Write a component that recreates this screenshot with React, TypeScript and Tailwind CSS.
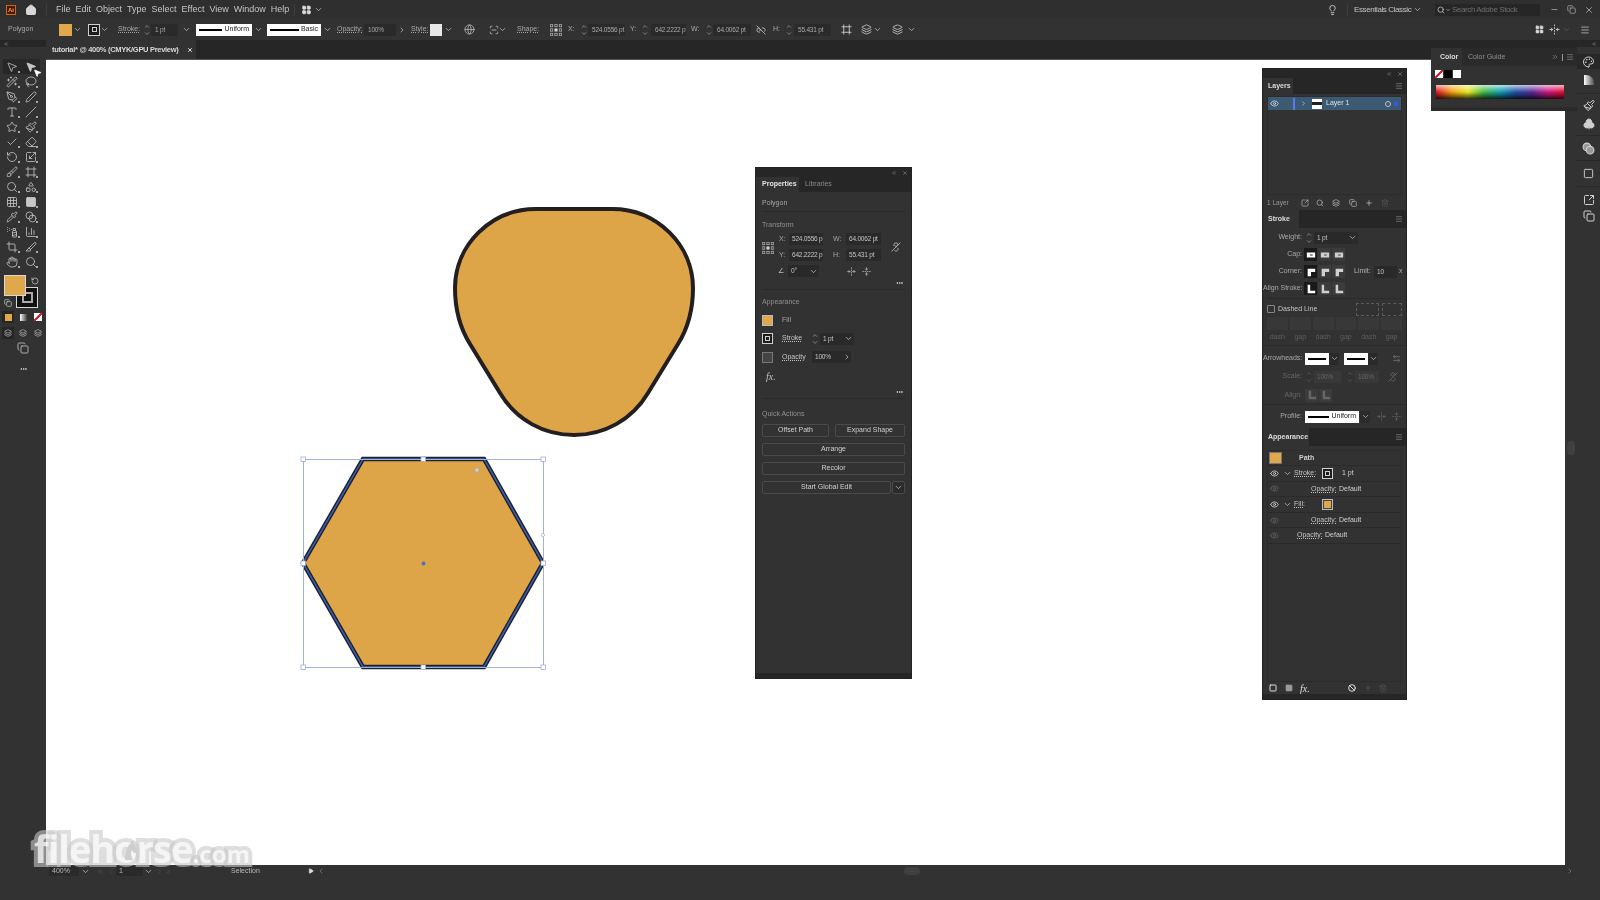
import {
  Lasso, Wand2, PenTool, Pen, Type, Slash, Star, Paintbrush, Brush, Check, Eraser, RotateCcw, Scaling,
  Shapes, Grid3x3, Pipette, Blend, SprayCan, ChartColumn, Crop, Slice, Hand, Search, MousePointer2,
  ChevronDown, ChevronUp, ChevronRight, ChevronLeft, ChevronsRight, ChevronsLeft, Eye, Link2Off, Lightbulb, Home, Menu, X, Minus, Copy,
  LayoutGrid, Palette, Club, SquareArrowOutUpRight, Ban, Trash2, Plus, Square, Layers, ArrowLeftRight, FoldVertical, FoldHorizontal,
  MoreHorizontal, ScanLine, Frame, Globe, Play,
} from 'lucide-react'

const FONT = "font-['Liberation_Sans','Noto_Sans',sans-serif]"

function Spinner() {
  return (
    <div className="flex flex-col items-center w-[8px] shrink-0 text-[#b5b5b5]">
      <ChevronUp className="w-[8px] h-[7px]" />
      <ChevronDown className="w-[8px] h-[7px]" />
    </div>
  )
}

function Chev({ className = '' }: { className?: string }) {
  return <ChevronDown className={`w-[9px] h-[9px] text-[#c0c0c0] shrink-0 ${className}`} />
}

function RefGrid({ className = '' }: { className?: string }) {
  return (
    <svg viewBox="0 0 12 12" className={`w-[12px] h-[12px] shrink-0 ${className}`} fill="none" stroke="#a8a8a8" strokeWidth="0.8">
      {[1.5, 6, 10.5].map((y) => [1.5, 6, 10.5].map((x) => (
        <rect key={`${x}-${y}`} x={x - 1.2} y={y - 1.2} width="2.4" height="2.4" fill={x === 6 && y === 6 ? '#eee' : 'none'} />
      )))}
    </svg>
  )
}

function LineBox({ label, className }: { label?: string; className: string }) {
  return (
    <div className={`h-[12px] bg-white flex items-center px-[3px] gap-[2px] shrink-0 ${className}`}>
      <div className="flex-1 h-[2px] bg-black" />
      {label && <span className="text-[7px] text-[#222]">{label}</span>}
    </div>
  )
}

function StrokeSwatch({ className = '' }: { className?: string }) {
  return (
    <div className={`w-[11px] h-[11px] bg-[#1c1c1c] border border-[#d0d0d0] flex items-center justify-center shrink-0 ${className}`}>
      <div className="w-[5px] h-[5px] border border-[#d0d0d0]" />
    </div>
  )
}

function PropField({ text, className }: { text: string; className: string }) {
  return (
    <div className={`h-[12px] bg-[#292929] text-[6.5px] tracking-[-0.2px] text-[#c4c4c4] flex items-center px-[3px] whitespace-nowrap overflow-hidden shrink-0 ${className}`}>
      {text}
    </div>
  )
}

function Dots({ className = '' }: { className?: string }) {
  return <MoreHorizontal className={`w-[11px] h-[8px] text-[#d0d0d0] ${className}`} strokeWidth={3} />
}

function StrokeIcon({ kind, active, dim }: { kind: 'cap' | 'corner' | 'align'; active?: boolean; dim?: boolean }) {
  const body = kind === 'cap'
    ? <path d="M1 3h10v6H1zM5 5.4h3v1.2H5z" fillRule="evenodd" />
    : kind === 'corner'
      ? <path d="M2 2h9v4H6v5H2z" />
      : <path d="M2 1h3v7h6v3H2z" />
  return (
    <div className={`w-[13px] h-[13px] flex items-center justify-center shrink-0 ${active ? 'bg-[#1a1a1a]' : 'bg-[#3b3b3b]'}`}>
      <svg viewBox="0 0 12 12" className="w-[10px] h-[10px]" fill={active ? '#fff' : dim ? '#666' : '#cfcfcf'}>{body}</svg>
    </div>
  )
}

function PanelTop() {
  return (
    <div className="h-[9px] bg-[#262626] flex items-center justify-end gap-[5px] pr-[3px] shrink-0">
      <ChevronsLeft className="w-[6px] h-[6px] text-[#9a9a9a]" />
      <X className="w-[6px] h-[6px] text-[#9a9a9a]" />
    </div>
  )
}

function ToolButton({ icon: Icon, active, fill }: { icon: any; active?: boolean; fill?: boolean }) {
  return (
    <div className={`relative h-[15px] flex items-center justify-center ${active ? 'bg-[#272727]' : ''}`}>
      <Icon className="w-[12px] h-[12px] text-[#c6c6c6]" fill={fill ? '#c6c6c6' : 'none'} strokeWidth={1.6} />
      <span className="absolute right-[2px] bottom-[1px] w-[2px] h-[2px] bg-[#a8a8a8]" />
    </div>
  )
}

const tools = [
  MousePointer2, MousePointer2, Wand2, Lasso, PenTool, Pen, Type, Slash, Star, Paintbrush,
  Check, Eraser, RotateCcw, Scaling, Brush, Frame, Search, Shapes, Grid3x3, Square, Pipette, Blend,
  SprayCan, ChartColumn, Crop, Slice, Hand, Search,
]

function LeftToolbar() {
  return (
    <aside className="relative w-[46px] shrink-0 bg-[#323232] flex flex-col">
      <div className="h-[7px] bg-[#262626] flex items-center pl-[3px]">
        <ChevronsLeft className="w-[6px] h-[6px] text-[#999]" />
      </div>
      <div className="grid grid-cols-2 w-[37px] ml-[3px] mt-[12px]">
        {tools.map((t, i) => <ToolButton key={i} icon={t} active={i < 2} fill={i === 1 || i === 19} />)}
      </div>
      <div className="relative h-[35px] mx-[4px] mt-[6px]">
        <div className="absolute left-[12px] top-[12px] w-[22px] h-[21px] bg-[#111] border border-[#d8d8d8] flex items-center justify-center">
          <div className="w-[11px] h-[11px] border-2 border-[#aaa]" />
        </div>
        <div className="absolute left-0 top-0 w-[22px] h-[21px] bg-[#e0a84a] border border-[#d8d8d8]" />
        <RotateCcw className="absolute left-[27px] top-[2px] w-[8px] h-[8px] text-[#d0d0d0]" />
        <Copy className="absolute left-0 top-[24px] w-[8px] h-[8px] text-[#d0d0d0]" />
      </div>
      <div className="flex justify-center gap-[3px] mt-[1px]">
        <div className="w-[12px] h-[12px] bg-[#262626] flex items-center justify-center"><div className="w-[7px] h-[7px] bg-[#e0a84a]" /></div>
        <div className="w-[12px] h-[12px] flex items-center justify-center"><div className="w-[7px] h-[7px] bg-gradient-to-r from-white to-[#444]" /></div>
        <div className="w-[12px] h-[12px] flex items-center justify-center">
          <div className="w-[8px] h-[8px] bg-[linear-gradient(135deg,#fff_40%,#e0202a_40%,#e0202a_60%,#fff_60%)]" />
        </div>
      </div>
      <div className="flex justify-center gap-[3px] mt-[4px]">
        {[0, 1, 2].map((i) => (
          <div key={i} className={`w-[12px] h-[12px] flex items-center justify-center ${i === 0 ? 'bg-[#262626]' : ''}`}>
            <Layers className="w-[8px] h-[8px] text-[#bbb]" />
          </div>
        ))}
      </div>
      <div className="flex justify-center mt-[3px]"><Copy className="w-[14px] h-[12px] text-[#aaa]" /></div>
      <div className="flex justify-center mt-[11px]"><Dots className="text-[#aaa]" /></div>
      <MousePointer2 className="absolute left-[33px] top-[27px] w-[9px] h-[12px] text-white" fill="#fff" />
    </aside>
  )
}

function MenuBar() {
  const items = ['File', 'Edit', 'Object', 'Type', 'Select', 'Effect', 'View', 'Window', 'Help']
  return (
    <header className="h-[19px] bg-[#2f2f2f] flex items-center text-[9px] text-[#c4c4c4] shrink-0">
      <div className="ml-[6px] w-[10px] h-[10px] bg-[#4a1a00] border border-[#c9661b] text-[6px] leading-none text-[#ff9a2e] flex items-center justify-center font-bold">Ai</div>
      <Home className="ml-[9px] w-[12px] h-[12px] text-[#d8d8d8]" fill="#d8d8d8" />
      <div className="ml-[9px] w-px h-[12px] bg-[#3e3e3e]" />
      <nav className="ml-[9px] flex gap-[5px]">
        {items.map((m) => <span key={m}>{m}</span>)}
      </nav>
      <div className="ml-[5px] w-px h-[12px] bg-[#3e3e3e]" />
      <LayoutGrid className="ml-[6px] w-[11px] h-[10px] text-[#ddd]" fill="#ddd" />
      <Chev className="ml-[2px]" />
      <div className="ml-auto flex items-center">
        <Lightbulb className="w-[11px] h-[12px] text-[#c8c8c8]" />
        <div className="ml-[9px] w-px h-[12px] bg-[#3e3e3e]" />
        <span className="ml-[6px] text-[8px] tracking-[-0.4px] w-[56px] whitespace-nowrap">Essentials Classic</span>
        <Chev className="ml-[3px]" />
        <div className="ml-[13px] w-[105px] h-[12px] bg-[#262626] rounded-[1px] flex items-center px-[2px] text-[8px] tracking-[-0.4px] text-[#6f6f6f]">
          <Search className="w-[8px] h-[8px] text-[#ddd]" />
          <ChevronDown className="w-[6px] h-[6px] text-[#ddd]" />
          <span className="ml-[1px] whitespace-nowrap">Search Adobe Stock</span>
        </div>
        <div className="ml-[2px] w-[58px] flex items-center justify-between pr-[6px] pl-[8px] text-[#aaa]">
          <Minus className="w-[9px] h-[9px]" />
          <Copy className="w-[9px] h-[9px]" />
          <X className="w-[10px] h-[10px]" />
        </div>
      </div>
    </header>
  )
}

function CtlField({ text, className }: { text: string; className: string }) {
  return <div className={`h-[12px] bg-[#2a2a2a] text-[6.5px] tracking-[-0.2px] flex items-center pl-[4px] whitespace-nowrap overflow-hidden ${className}`}>{text}</div>
}

function ControlBar() {
  return (
    <div className="h-[21px] bg-[#323232] flex items-center text-[7px] text-[#a8a8a8] shrink-0 whitespace-nowrap [&>*]:shrink-0">
      <span className="ml-[8px] w-[51px]">Polygon</span>
      <div className="w-[13px] h-[12px] bg-[#e0a84a]" />
      <Chev className="ml-[1px]" />
      <StrokeSwatch className="ml-[6px] w-[12px] h-[12px]" />
      <Chev />
      <span className="ml-[9px] w-[20px] underline decoration-dotted">Stroke:</span>
      <div className="ml-[5px]"><Spinner /></div>
      <CtlField text="1 pt" className="w-[27px]" />
      <Chev className="ml-[4px]" />
      <LineBox label="Uniform" className="ml-[5px] w-[56px]" />
      <Chev className="ml-[2px]" />
      <LineBox label="Basic" className="ml-[4px] w-[54px]" />
      <Chev className="ml-[2px]" />
      <span className="ml-[5px] w-[24px] underline decoration-dotted">Opacity:</span>
      <CtlField text="100%" className="ml-[3px] w-[32px]" />
      <ChevronRight className="ml-[2px] w-[8px] h-[8px] text-[#ccc]" />
      <span className="ml-[5px] w-[16px] underline decoration-dotted">Style:</span>
      <div className="ml-[3px] w-[12px] h-[12px] bg-[#e8e8e8]" />
      <Chev className="ml-[2px]" />
      <Globe className="ml-[11px] w-[11px] h-[11px] text-[#aaa]" />
      <ScanLine className="ml-[14px] w-[10px] h-[10px] text-[#bbb]" />
      <Chev className="-ml-[1px]" />
      <span className="ml-[10px] w-[20px] underline decoration-dotted">Shape:</span>
      <RefGrid className="ml-[13px]" />
      <span className="ml-[6px] w-[6px]">X:</span>
      <div className="ml-[6px]"><Spinner /></div>
      <CtlField text="524.0556 pt" className="w-[37px]" />
      <span className="ml-[5px] w-[6px]">Y:</span>
      <div className="ml-[5px]"><Spinner /></div>
      <CtlField text="642.2222 pt" className="ml-[2px] w-[35px]" />
      <span className="ml-[5px] w-[8px]">W:</span>
      <div className="ml-[6px]"><Spinner /></div>
      <CtlField text="64.0062 pt" className="w-[38px]" />
      <Link2Off className="ml-[5px] w-[10px] h-[10px] text-[#c0c0c0]" />
      <span className="ml-[7px] w-[6px]">H:</span>
      <div className="ml-[6px]"><Spinner /></div>
      <CtlField text="55.431 pt" className="ml-[1px] w-[37px]" />
      <Frame className="ml-[10px] w-[11px] h-[11px] text-[#ccc]" />
      <Layers className="ml-[9px] w-[11px] h-[11px] text-[#bbb]" />
      <Chev className="ml-[1px]" />
      <Layers className="ml-[10px] w-[11px] h-[11px] text-[#bbb]" />
      <Chev className="ml-[4px]" />
      <div className="ml-auto flex items-center pr-[10px]">
        <LayoutGrid className="w-[9px] h-[9px] text-[#ddd]" fill="#ddd" />
        <FoldHorizontal className="ml-[5px] w-[11px] h-[11px] text-[#ccc]" />
        <Chev className="ml-[2px] opacity-30" />
        <Menu className="ml-[9px] w-[10px] h-[10px] text-[#bbb]" />
      </div>
    </div>
  )
}

function Artwork() {
  const handles: [number, number][] = [[303, 459], [423, 459], [543, 459], [303, 563], [543, 563], [303, 667], [423, 667], [543, 667]]
  return (
    <svg viewBox="46 60 1519 805" className="absolute inset-0 w-full h-full">
      <path
        d="M536 209 L612 209 C657 209 693 245 693 288 C693 308 688 328 678 344 L648 393 C632 420 604 435 574 435 C544 435 516 420 500 393 L470 344 C460 328 455 308 455 288 C455 245 491 209 536 209 Z"
        fill="#dea548" stroke="#231f20" strokeWidth="4"
      />
      <path d="M363 459 H484 L543 563 L484 667 H363 L303 563 Z" fill="#dea548" stroke="#1c2130" strokeWidth="4.4" strokeLinejoin="miter" />
      <path d="M363 459 H484 L543 563 L484 667 H363 L303 563 Z" fill="none" stroke="#3f5fae" strokeWidth="1.5" />
      <rect x="303.5" y="459.5" width="240" height="208" fill="none" stroke="#a3b2d4" strokeWidth="1" />
      {handles.map(([x, y]) => (
        <rect key={`${x}-${y}`} x={x - 2} y={y - 2} width="4.5" height="4.5" fill="#fff" stroke="#9fb0d2" strokeWidth="0.8" />
      ))}
      <circle cx="423.5" cy="563.5" r="2" fill="#4f6fc0" />
      <circle cx="477" cy="470" r="2.4" fill="#e8c88e" stroke="#8fa2cc" strokeWidth="0.8" />
      <circle cx="543" cy="535" r="1.6" fill="#fff" stroke="#9fb0d2" strokeWidth="0.7" />
    </svg>
  )
}

function StatusBar() {
  return (
    <div className="h-[12px] bg-[#323232] flex items-center text-[7px] text-[#b8b8b8] shrink-0">
      <div className="ml-[3px] w-[30px] h-[10px] bg-[#2a2a2a] pl-[3px] leading-[10px]">400%</div>
      <Chev className="ml-[2px]" />
      <ChevronsLeft className="ml-[7px] w-[7px] h-[7px] text-[#555]" />
      <ChevronLeft className="ml-[3px] w-[7px] h-[7px] text-[#555]" />
      <div className="ml-[2px] w-[27px] h-[10px] bg-[#2a2a2a] pl-[3px] leading-[10px]">1</div>
      <Chev className="ml-[1px]" />
      <ChevronRight className="ml-[3px] w-[7px] h-[7px] text-[#555]" />
      <ChevronsRight className="ml-[2px] w-[7px] h-[7px] text-[#555]" />
      <span className="ml-[59px] w-[77px]">Selection</span>
      <Play className="w-[6px] h-[6px] text-[#ddd]" fill="#ddd" />
      <ChevronLeft className="ml-[3px] w-[8px] h-[8px] text-[#888]" />
      <div className="relative flex-1 h-full">
        <div className="absolute left-[579px] top-[2px] w-[16px] h-[8px] rounded-full bg-[#414141]" />
      </div>
      <ChevronRight className="w-[8px] h-[8px] text-[#888] mr-[3px]" />
    </div>
  )
}

function RightDock() {
  return (
    <aside className="w-[23px] shrink-0 bg-[#323232] flex flex-col items-center text-[#d0d0d0]">
      <div className="h-[7px] w-full bg-[#262626] flex items-center justify-end pr-[3px]">
        <ChevronsLeft className="w-[6px] h-[6px] text-[#999]" />
      </div>
      <div className="mt-[7px] w-full h-[15px] bg-[#272727] flex items-center justify-center"><Palette className="w-[13px] h-[12px]" /></div>
      <div className="mt-[3px] h-[16px] flex items-center"><div className="w-[10px] h-[10px] bg-gradient-to-r from-white to-[#555] rounded-tr-[8px]" /></div>
      <div className="mt-[5px] w-full border-t border-[#292929] h-[24px] pt-[5px] flex justify-center"><Paintbrush className="w-[12px] h-[13px]" /></div>
      <div className="h-[14px] flex items-center"><Club className="w-[12px] h-[12px]" fill="#d0d0d0" /></div>
      <div className="mt-[4px] w-full border-t border-[#292929] h-[25px] flex items-center justify-center"><Blend className="w-[13px] h-[13px]" fill="#999" /></div>
      <div className="w-full border-t border-[#292929] h-[26px] flex items-center justify-center"><Square className="w-[11px] h-[11px]" /></div>
      <div className="w-full border-t border-[#292929] h-[20px] flex items-end justify-center"><SquareArrowOutUpRight className="w-[12px] h-[12px]" /></div>
      <div className="h-[16px] flex items-end justify-center"><Copy className="w-[12px] h-[12px]" /></div>
    </aside>
  )
}

function PropertiesPanel() {
  return (
    <section className="absolute left-[755px] top-[167px] w-[157px] h-[512px] bg-[#323232] flex flex-col text-[7px] text-[#a5a5a5] border border-[#222]">
      <PanelTop />
      <div className="h-[15px] bg-[#262626] flex items-stretch shrink-0">
        <div className="w-[43px] bg-[#323232] flex items-center pl-[6px] text-[#e4e4e4] font-bold">Properties</div>
        <div className="flex items-center pl-[6px] text-[#8a8a8a]">Libraries</div>
      </div>
      <div className="mx-[6px] h-[20px] pt-[3px] flex items-center border-b border-[#2a2a2a] shrink-0">Polygon</div>
      <div className="mx-[6px] h-[78px] border-b border-[#2a2a2a] shrink-0 flex flex-col">
        <div className="h-[20px] flex items-end pb-[2px] text-[#8f8f8f]">Transform</div>
        <div className="flex mt-[1px]">
          <RefGrid className="mt-[9px]" />
          <div className="ml-[5px] flex flex-col gap-[4px]">
            <div className="flex items-center"><span className="w-[9px]">X:</span><PropField text="524.0556 p" className="ml-[1px] w-[34px]" /><span className="ml-[10px] w-[13px]">W:</span><PropField text="64.0062 pt" className="w-[35px]" /></div>
            <div className="flex items-center"><span className="w-[9px]">Y:</span><PropField text="642.2222 p" className="ml-[1px] w-[34px]" /><span className="ml-[10px] w-[13px]">H:</span><PropField text="55.431 pt" className="w-[35px]" /></div>
          </div>
          <Link2Off className="ml-[10px] mt-[8px] w-[10px] h-[12px] text-[#bbb] rotate-90" />
        </div>
        <div className="flex items-center mt-[4px] ml-[16px]">
          <span className="text-[#bbb] w-[10px]">∠</span>
          <PropField text="0°" className="w-[20px]" />
          <div className="w-[11px] h-[12px] bg-[#2a2a2a] flex items-center justify-center"><Chev /></div>
          <FoldHorizontal className="ml-[28px] w-[9px] h-[9px] text-[#bbb]" />
          <FoldVertical className="ml-[6px] w-[9px] h-[9px] text-[#bbb]" />
        </div>
        <div className="flex justify-end mt-[2px]"><Dots /></div>
      </div>
      <div className="mx-[6px] h-[109px] border-b border-[#2a2a2a] shrink-0 flex flex-col">
        <div className="h-[17px] flex items-end text-[#8f8f8f]">Appearance</div>
        <div className="flex items-center h-[18px] mt-[4px]"><div className="w-[11px] h-[11px] bg-[#e0a84a] border border-[#bbb]" /><span className="ml-[9px]">Fill</span></div>
        <div className="flex items-center h-[19px]">
          <StrokeSwatch />
          <span className="ml-[9px] w-[22px] text-[#c4c4c4] underline decoration-dotted">Stroke</span>
          <div className="ml-[7px]"><Spinner /></div>
          <PropField text="1 pt" className="ml-[1px] w-[23px]" />
          <div className="w-[11px] h-[12px] bg-[#2a2a2a] flex items-center justify-center"><Chev /></div>
        </div>
        <div className="flex items-center h-[18px]">
          <div className="w-[11px] h-[11px] border border-[#777] bg-[#444]" />
          <span className="ml-[9px] w-[30px] text-[#c4c4c4] underline decoration-dotted">Opacity</span>
          <PropField text="100%" className="w-[30px]" />
          <div className="w-[9px] h-[12px] bg-[#2a2a2a] flex items-center justify-center"><ChevronRight className="w-[8px] h-[8px] text-[#ccc]" /></div>
        </div>
        <div className="h-[20px] flex items-center pl-[4px] italic font-['Liberation_Serif',serif] text-[10px] text-[#c0c0c0]">fx.</div>
        <div className="flex justify-end mt-[2px]"><Dots /></div>
      </div>
      <div className="mx-[6px] flex flex-col text-[#d0d0d0]">
        <div className="h-[20px] flex items-end text-[#8f8f8f]">Quick Actions</div>
        <div className="flex gap-[6px] mt-[5px]">
          <div className="h-[13px] w-[67px] border border-[#4a4a4a] rounded-[2px] flex items-center justify-center">Offset Path</div>
          <div className="h-[13px] flex-1 border border-[#4a4a4a] rounded-[2px] flex items-center justify-center">Expand Shape</div>
        </div>
        <div className="h-[13px] mt-[6px] border border-[#4a4a4a] rounded-[2px] flex items-center justify-center">Arrange</div>
        <div className="h-[13px] mt-[6px] border border-[#4a4a4a] rounded-[2px] flex items-center justify-center">Recolor</div>
        <div className="flex gap-[1px] mt-[6px]">
          <div className="h-[13px] flex-1 border border-[#4a4a4a] rounded-[2px] flex items-center justify-center">Start Global Edit</div>
          <div className="h-[13px] w-[13px] border border-[#4a4a4a] rounded-[2px] flex items-center justify-center bg-[#2b2b2b]"><Chev /></div>
        </div>
      </div>
      <div className="mt-auto h-[5px] bg-[#262626]" />
    </section>
  )
}

function StrokeRow({ label, children, className = 'h-[17px]', dim }: { label: string; children?: React.ReactNode; className?: string; dim?: boolean }) {
  return (
    <div className={`flex items-center shrink-0 ${className}`}>
      <span className={`w-[39px] text-right whitespace-nowrap ${dim ? 'text-[#666]' : 'text-[#a8a8a8]'}`}>{label}</span>
      <div className="ml-[3px] flex items-center">{children}</div>
    </div>
  )
}

function AppearanceRow({ eye, chevron, children, className = 'h-[15.6px]' }: { eye?: 'on' | 'dim'; chevron?: boolean; children: React.ReactNode; className?: string }) {
  return (
    <div className={`flex items-center border-b border-[#2a2a2a] shrink-0 ${className}`}>
      <div className="w-[13px] flex justify-center">
        {eye && <Eye className={`w-[9px] h-[9px] ${eye === 'on' ? 'text-[#ddd]' : 'text-[#666]'}`} />}
      </div>
      <div className="w-[13px] flex justify-center">{chevron && <Chev />}</div>
      {children}
    </div>
  )
}

function LayersPanel() {
  return (
    <section className="absolute left-[1262px] top-[68px] w-[145px] h-[632px] bg-[#323232] flex flex-col text-[7px] text-[#b0b0b0] border border-[#222]">
      <PanelTop />
      <div className="h-[16px] bg-[#262626] flex items-stretch justify-between shrink-0">
        <div className="w-[30px] bg-[#323232] flex items-center pl-[5px] text-[#dcdcdc] font-bold">Layers</div>
        <Menu className="self-center mr-[3px] w-[8px] h-[8px] text-[#888]" />
      </div>
      <div className="mx-[4px] mt-[2px] h-[99px] border border-[#2c2c2c] shrink-0">
        <div className="h-[13px] bg-[#3d5a75] flex items-center text-[#e0e0e0]">
          <Eye className="ml-[2px] w-[9px] h-[9px] text-[#ddd]" />
          <div className="ml-[14px] w-[2px] h-[12px] bg-[#5a7be8]" />
          <ChevronRight className="ml-[5px] w-[7px] h-[7px]" />
          <div className="ml-[5px] w-[10px] h-[10px] bg-white flex items-center"><div className="w-full h-[3px] bg-[#222]" /></div>
          <span className="ml-[4px]">Layer 1</span>
          <div className="ml-auto mr-[3px] w-[6px] h-[6px] rounded-full border border-[#bbb]" />
          <div className="mr-[3px] w-[4px] h-[4px] bg-[#3a55dd]" />
        </div>
      </div>
      <div className="h-[15px] mx-[4px] flex items-center shrink-0 text-[#999]">
        <span className="w-[34px] text-[6.5px]">1 Layer</span>
        <SquareArrowOutUpRight className="w-[8px] h-[8px] text-[#bbb]" />
        <Search className="ml-[7px] w-[8px] h-[8px] text-[#bbb]" />
        <Layers className="ml-[8px] w-[8px] h-[8px] text-[#bbb]" />
        <Copy className="ml-[9px] w-[8px] h-[8px] text-[#bbb]" />
        <Plus className="ml-[8px] w-[8px] h-[8px] text-[#ccc]" />
        <Trash2 className="ml-[8px] w-[8px] h-[8px] text-[#555]" />
      </div>
      <div className="h-[18px] bg-[#262626] flex items-stretch justify-between shrink-0">
        <div className="w-[36px] bg-[#323232] flex items-center pl-[5px] text-[#dcdcdc] font-bold">Stroke</div>
        <Menu className="self-center mr-[3px] w-[8px] h-[8px] text-[#888]" />
      </div>
      <div className="pt-[1px] flex flex-col shrink-0">
        <StrokeRow label="Weight:">
          <Spinner />
          <PropField text="1 pt" className="ml-[1px] w-[33px]" />
          <div className="w-[11px] h-[12px] bg-[#2a2a2a] flex items-center justify-center"><Chev /></div>
        </StrokeRow>
        <StrokeRow label="Cap:">
          <div className="flex gap-[1px] -ml-[1px]"><StrokeIcon kind="cap" active /><StrokeIcon kind="cap" /><StrokeIcon kind="cap" /></div>
        </StrokeRow>
        <StrokeRow label="Corner:">
          <div className="flex gap-[1px] -ml-[1px]"><StrokeIcon kind="corner" active /><StrokeIcon kind="corner" /><StrokeIcon kind="corner" /></div>
          <span className="ml-[9px] w-[18px]">Limit:</span>
          <PropField text="10" className="ml-[2px] w-[23px]" />
          <span className="ml-[2px]">x</span>
        </StrokeRow>
        <StrokeRow label="Align Stroke:">
          <div className="flex gap-[1px] -ml-[1px]"><StrokeIcon kind="align" active /><StrokeIcon kind="align" /><StrokeIcon kind="align" /></div>
        </StrokeRow>
      </div>
      <div className="mx-[4px] mt-[1px] border-t border-[#2a2a2a] pt-[2px] shrink-0">
        <div className="h-[16px] flex items-center">
          <div className="w-[8px] h-[8px] border border-[#888] rounded-[1px]" />
          <span className="ml-[3px] text-[#c4c4c4]">Dashed Line</span>
          <div className="ml-auto w-[23px] h-[13px] border border-dashed border-[#5a5a5a]" />
          <div className="ml-[3px] w-[20px] h-[13px] border border-dashed border-[#5a5a5a]" />
        </div>
        <div className="grid grid-cols-6 gap-[2px]">
          {['dash', 'gap', 'dash', 'gap', 'dash', 'gap'].map((d, i) => (
            <div key={i} className="flex flex-col items-center">
              <div className="w-full h-[13px] bg-[#383838]" />
              <span className="text-[#5e5e5e] leading-[11px] mt-[1px]">{d}</span>
            </div>
          ))}
        </div>
      </div>
      <div className="mt-[3px] border-t border-[#2a2a2a] pt-[4px] shrink-0">
        <StrokeRow label="Arrowheads:" className="h-[17px]">
          <LineBox className="w-[24px] px-[2px]" />
          <div className="w-[10px] h-[12px] bg-[#2a2a2a] flex items-center justify-center"><Chev /></div>
          <LineBox className="ml-[5px] w-[24px] px-[2px]" />
          <div className="w-[10px] h-[12px] bg-[#2a2a2a] flex items-center justify-center"><Chev /></div>
          <ArrowLeftRight className="ml-[14px] w-[9px] h-[9px] text-[#777]" />
        </StrokeRow>
        <StrokeRow label="Scale:" className="h-[19px]" dim>
          <div className="opacity-40"><Spinner /></div>
          <PropField text="100%" className="ml-[1px] w-[27px] !bg-[#383838] !text-[#666]" />
          <div className="ml-[5px] opacity-40"><Spinner /></div>
          <PropField text="100%" className="ml-[1px] w-[24px] !bg-[#383838] !text-[#666]" />
          <Link2Off className="ml-[9px] w-[10px] h-[10px] text-[#666] rotate-90" />
        </StrokeRow>
        <StrokeRow label="Align:" className="h-[18px]" dim>
          <StrokeIcon kind="align" dim />
          <div className="ml-[1px]"><StrokeIcon kind="align" dim /></div>
        </StrokeRow>
      </div>
      <div className="border-t border-[#2a2a2a] pt-[3px] shrink-0">
        <StrokeRow label="Profile:" className="h-[17px]">
          <LineBox label="Uniform" className="w-[54px]" />
          <div className="ml-[1px] w-[10px] h-[12px] bg-[#2a2a2a] flex items-center justify-center"><Chev /></div>
          <FoldHorizontal className="ml-[7px] w-[9px] h-[9px] text-[#666]" />
          <FoldVertical className="ml-[6px] w-[9px] h-[9px] text-[#666]" />
        </StrokeRow>
      </div>
      <div className="mt-[3px] h-[18px] bg-[#262626] flex items-stretch justify-between shrink-0">
        <div className="w-[46px] bg-[#323232] flex items-center pl-[5px] text-[#dcdcdc] font-bold">Appearance</div>
        <Menu className="self-center mr-[3px] w-[8px] h-[8px] text-[#888]" />
      </div>
      <div className="mx-[4px] mt-[4px] flex-1 border border-[#2c2c2c] flex flex-col min-h-0">
        <AppearanceRow className="h-[15px]">
          <div className="-ml-[25px] w-[13px] h-[12px] bg-[#e0a84a] border border-[#777]" />
          <span className="ml-[17px] font-bold text-[#d0d0d0]">Path</span>
        </AppearanceRow>
        <AppearanceRow eye="on" chevron>
          <span className="w-[28px] underline decoration-dotted text-[#c4c4c4]">Stroke:</span>
          <StrokeSwatch />
          <span className="ml-[9px] text-[#d0d0d0]">1 pt</span>
        </AppearanceRow>
        <AppearanceRow eye="dim">
          <span className="ml-[17px] w-[27px] underline decoration-dotted whitespace-nowrap text-[#c4c4c4]">Opacity:</span>
          <span className="ml-[1px] text-[#d0d0d0]">Default</span>
        </AppearanceRow>
        <AppearanceRow eye="on" chevron>
          <span className="w-[28px] text-[#c4c4c4] underline decoration-dotted">Fill:</span>
          <div className="w-[11px] h-[11px] border border-[#bbb] bg-[#444] flex items-center justify-center"><div className="w-[7px] h-[7px] bg-[#e0a84a]" /></div>
        </AppearanceRow>
        <AppearanceRow eye="dim">
          <span className="ml-[17px] w-[27px] underline decoration-dotted whitespace-nowrap text-[#c4c4c4]">Opacity:</span>
          <span className="ml-[1px] text-[#d0d0d0]">Default</span>
        </AppearanceRow>
        <AppearanceRow eye="dim">
          <span className="ml-[3px] w-[27px] underline decoration-dotted whitespace-nowrap text-[#c4c4c4]">Opacity:</span>
          <span className="ml-[1px] text-[#d0d0d0]">Default</span>
        </AppearanceRow>
      </div>
      <div className="h-[12px] mx-[6px] flex items-center shrink-0 text-[#ddd]">
        <Square className="w-[8px] h-[8px]" strokeWidth={3} />
        <Square className="ml-[8px] w-[8px] h-[8px] text-[#999]" fill="#999" />
        <span className="ml-[7px] italic font-['Liberation_Serif',serif] text-[10px]">fx.</span>
        <Ban className="ml-[38px] w-[8px] h-[8px]" strokeWidth={3} />
        <Plus className="ml-[8px] w-[8px] h-[8px] text-[#555]" />
        <Trash2 className="ml-[7px] w-[8px] h-[8px] text-[#555]" />
      </div>
      <div className="h-[5px] bg-[#262626] shrink-0" />
    </section>
  )
}

function ColorPanel() {
  return (
    <section className="absolute left-[1431px] top-[48px] w-[146px] h-[63px] bg-[#323232] flex flex-col text-[7px]">
      <div className="h-[18px] bg-[#2a2a2a] flex items-stretch shrink-0">
        <div className="w-[31px] bg-[#323232] flex items-center pl-[9px] text-[#dcdcdc] font-bold">Color</div>
        <div className="ml-[6px] flex items-center text-[#8f8f8f]">Color Guide</div>
        <div className="ml-auto flex items-center gap-[3px] pr-[3px] text-[#888]">
          <ChevronsRight className="w-[8px] h-[8px]" />
          <div className="w-px h-[7px] bg-[#999]" />
          <Menu className="w-[8px] h-[8px]" />
        </div>
      </div>
      <div className="ml-[4px] mt-[4px] flex gap-[1px] shrink-0">
        <div className="w-[8px] h-[8px] bg-[linear-gradient(135deg,#fff_40%,#e0202a_40%,#e0202a_60%,#fff_60%)]" />
        <div className="w-[8px] h-[8px] bg-black" />
        <div className="w-[8px] h-[8px] bg-white" />
      </div>
      <div className="relative ml-[5px] mt-[7px] w-[128px] h-[14px] bg-[linear-gradient(90deg,#e0102a,#f0a010,#e8e820,#40b848,#10a0b0,#2050a8,#5a2a98,#d01880,#e01030)]">
        <div className="absolute inset-0 bg-gradient-to-b from-white/70 via-transparent to-black/80" />
      </div>
      <div className="mt-auto h-[4px] bg-[#2a2a2a]" />
    </section>
  )
}

export default function App() {
  return (
    <div className={`relative w-[1600px] h-[900px] overflow-hidden bg-[#323232] flex flex-col blur-[0.6px] ${FONT}`}>
      <MenuBar />
      <ControlBar />
      <div className="flex flex-1 min-h-0">
        <LeftToolbar />
        <div className="flex-1 min-w-0 flex flex-col">
          <div className="h-[19px] bg-[#262626] flex items-stretch shrink-0">
            <div className="w-[150px] bg-[#323232] flex items-center justify-between pl-[6px] pr-[3px] text-[7.5px] tracking-[-0.3px] text-[#d8d8d8] font-bold whitespace-nowrap">
              <span>tutorial* @ 400% (CMYK/GPU Preview)</span>
              <X className="w-[6px] h-[6px]" strokeWidth={4} />
            </div>
          </div>
          <div className="flex flex-1 min-h-0">
            <main className="relative flex-1 bg-white overflow-hidden border-t border-[#555]">
              <Artwork />
            </main>
            <div className="relative w-[12px] bg-[#323232] shrink-0">
              <div className="absolute left-[2px] top-[382px] w-[8px] h-[14px] rounded-full bg-[#414141]" />
            </div>
          </div>
          <StatusBar />
          <div className="h-[23px] shrink-0 bg-[#323232]" />
        </div>
        <RightDock />
      </div>
      <PropertiesPanel />
      <LayersPanel />
      <ColorPanel />
      <div className="absolute left-[34px] top-[832px] text-[38px] leading-[32px] font-bold tracking-[-1px] text-white/70 [-webkit-text-stroke:8px_rgba(200,200,200,0.6)] [paint-order:stroke_fill] font-['Open_Sans',sans-serif] whitespace-nowrap">
        filehorse<span className="text-[24px] tracking-normal">.com</span>
      </div>
      <svg viewBox="0 0 14 20" className="absolute left-[124px] top-[840px] w-[14px] h-[20px]" fill="#cfcfcf">
        <path d="M9 0 L10 4 C12 7 13 10 13 13 L10 13 L8 10 L7 13 C7 16 8 18 9 20 L1 20 C1 14 2 8 6 4 Z" />
      </svg>
    </div>
  )
}
